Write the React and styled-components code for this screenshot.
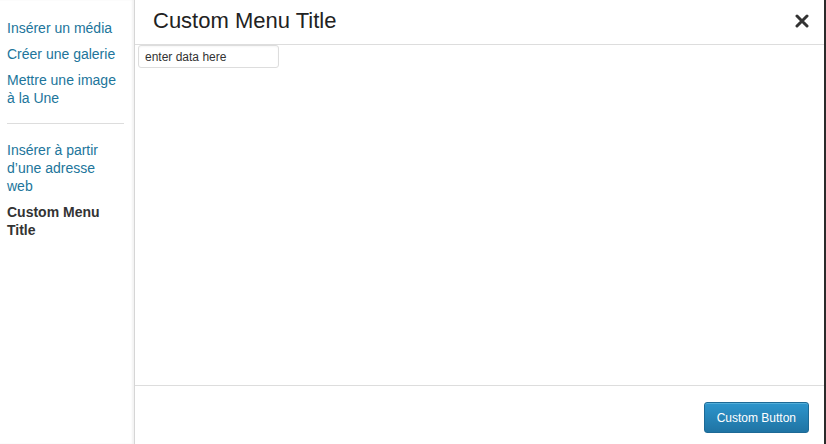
import React from "react";
import styled, { createGlobalStyle } from "styled-components";

const GlobalStyle = createGlobalStyle`
  html, body {
    margin: 0;
    padding: 0;
    background: #2b2b2b;
    font-family: "Liberation Sans", Arial, sans-serif;
    overflow: hidden;
  }
`;

const Frame = styled.div`
  width: 824px;
  height: 444px;
  display: flex;
  background: #fff;
  color: #333;
`;

const Menu = styled.div`
  width: 135px;
  flex-shrink: 0;
  padding-top: 15px;
  box-sizing: border-box;
  border-right: 1px solid #d6d6d6;
  box-shadow: inset -2px 0 2px rgba(0, 0, 0, 0.05);
  display: flex;
  flex-direction: column;
`;

const MenuItem = styled.a`
  display: block;
  padding: 4px 13px 4px 7px;
  font-size: 14px;
  line-height: 18px;
  color: ${(p) => (p.active ? "#333" : "#21759b")};
  font-weight: ${(p) => (p.active ? 700 : 400)};
  text-decoration: none;
`;

const Separator = styled.div`
  height: 1px;
  background: #dddddd;
  margin: 12px 10px 13px 7px;
`;

const Main = styled.div`
  flex: 1;
  display: flex;
  flex-direction: column;
`;

const Header = styled.div`
  height: 45px;
  flex-shrink: 0;
  box-sizing: border-box;
  border-bottom: 1px solid #dddddd;
  display: flex;
  align-items: center;
  justify-content: space-between;
  padding: 0 15px 0 18px;
`;

const Title = styled.h1`
  margin: 0;
  font-size: 22px;
  font-weight: 400;
  color: #222;
  line-height: 1;
  padding-bottom: 3px;
`;

const CloseButton = styled.button`
  border: none;
  background: none;
  padding: 0;
  width: 14px;
  height: 14px;
  display: flex;
  cursor: pointer;
  margin-bottom: 2px;
`;

const Content = styled.div`
  flex: 1;
  padding: 0 3px;
`;

const DataInput = styled.input`
  width: 141px;
  height: 23px;
  box-sizing: border-box;
  border: 1px solid #dddddd;
  border-radius: 3px;
  padding: 0 6px;
  font-family: "Liberation Sans", Arial, sans-serif;
  font-size: 12px;
  color: #333;
  outline: none;
  box-shadow: inset 0 1px 2px rgba(0, 0, 0, 0.04);
`;

const Footer = styled.div`
  height: 59px;
  flex-shrink: 0;
  box-sizing: border-box;
  border-top: 1px solid #dddddd;
  display: flex;
  justify-content: flex-end;
  align-items: flex-start;
  padding: 16px 15px 0 0;
`;

const PrimaryButton = styled.button`
  height: 31px;
  padding: 0 12px;
  border: 1px solid #1d6a96;
  border-radius: 3px;
  background: linear-gradient(to bottom, #2e95cc, #1f74a4);
  color: #fff;
  font-family: "Liberation Sans", Arial, sans-serif;
  font-size: 12px;
  cursor: pointer;
  box-shadow: inset 0 1px 0 rgba(120, 200, 230, 0.5);
`;

const App = () => {
  return (
    <>
      <GlobalStyle />
      <Frame>
        <Menu>
          <MenuItem href="#">Insérer un média</MenuItem>
          <MenuItem href="#">Créer une galerie</MenuItem>
          <MenuItem href="#">Mettre une image à la Une</MenuItem>
          <Separator />
          <MenuItem href="#">Insérer à partir d’une adresse web</MenuItem>
          <MenuItem active>Custom Menu Title</MenuItem>
        </Menu>
        <Main>
          <Header>
            <Title>Custom Menu Title</Title>
            <CloseButton aria-label="Fermer">
              <svg width="14" height="14" viewBox="0 0 14 14">
                <path
                  d="M2 2 L12 12 M12 2 L2 12"
                  stroke="#333"
                  strokeWidth="3"
                  strokeLinecap="round"
                />
              </svg>
            </CloseButton>
          </Header>
          <Content>
            <DataInput defaultValue="enter data here" />
          </Content>
          <Footer>
            <PrimaryButton>Custom Button</PrimaryButton>
          </Footer>
        </Main>
      </Frame>
    </>
  );
};

export default App;
